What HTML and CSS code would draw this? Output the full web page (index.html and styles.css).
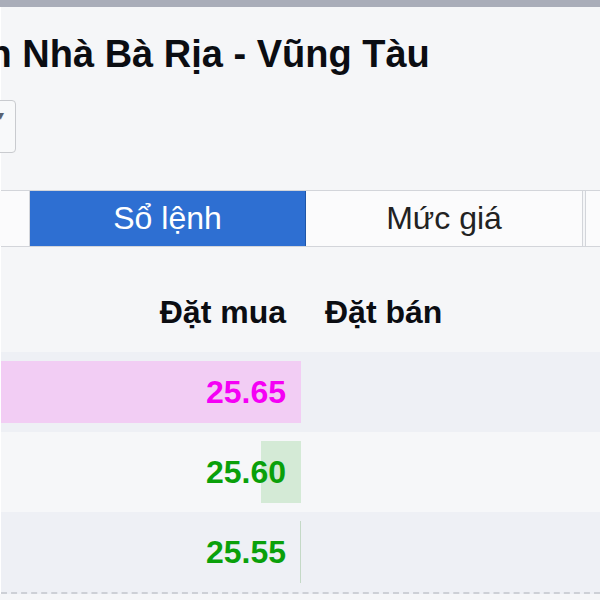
FILE: index.html
```html
<!DOCTYPE html>
<html lang="vi">
<head>
    <meta charset="UTF-8">
    <meta name="viewport" content="width=device-width, initial-scale=1.0">
    <title>HDC - Sổ lệnh</title>
    <link rel="stylesheet" href="styles.css">
</head>
<body>
    <div class="topbar"></div>
    <div class="panel">
        <h1 class="title">Công ty Cổ phần Phát triển Nhà Bà Rịa - Vũng Tàu</h1>
        <div class="picker">
            <span class="picker-value">HDC</span>
            <span class="picker-caret">&#9662;</span>
        </div>

        <div class="tabs">
            <div class="tab tab-first">Khớp lệnh</div>
            <div class="tab active">Sổ lệnh</div>
            <div class="tab">Mức giá</div>
            <div class="tab tab-last">Thống kê</div>
        </div>

        <div class="book">
            <div class="book-head">
                <div class="col-buy">Đặt mua</div>
                <div class="col-sell">Đặt bán</div>
            </div>
            <div class="book-row">
                <div class="col-buy">
                    <span class="bar bar-ceil" style="width: 100%"></span>
                    <span class="price ceil">25.65</span>
                </div>
                <div class="col-sell"></div>
            </div>
            <div class="book-row">
                <div class="col-buy">
                    <span class="bar bar-up" style="width: 13.3%"></span>
                    <span class="price up">25.60</span>
                </div>
                <div class="col-sell"></div>
            </div>
            <div class="book-row">
                <div class="col-buy">
                    <span class="bar bar-up bar-thin" style="width: 0.4%"></span>
                    <span class="price up">25.55</span>
                </div>
                <div class="col-sell"></div>
            </div>
        </div>
    </div>
</body>
</html>
```

FILE: styles.css
```css
body { margin: 0; height: 600px; overflow: hidden; background-color: #f5f6f8; font-family: 'Liberation Sans', Arial, sans-serif; color: #111; }
.topbar { height: 7px; background-color: #a9adb9; }
.panel { background-color: #f5f6f8; padding-top: 25px; border-left: 1px solid #fff; }
.title { margin: 0 0 24px -479px; font-size: 38px; line-height: 44px; font-weight: bold; white-space: nowrap; color: #0b0d12; }
.picker { display: flex; justify-content: space-between; align-items: flex-start; box-sizing: border-box; width: 216px; height: 53px; margin-left: -201px; padding: 7px 11px 0 12px; background: #f8f9fa; border: 1px solid #c9cbcf; border-radius: 4px; font-size: 20px; color: #5a6270; }
.picker-caret { font-size: 14px; line-height: 14px; }
.tabs { display: flex; margin-top: 37px; border-top: 1px solid #d3d5da; border-bottom: 1px solid #d3d5da; }
.tab { box-sizing: border-box; width: 277px; flex-shrink: 0; height: 55px; line-height: 55px; text-align: center; font-size: 32px; background-color: #fbfbfc; border-right: 1px solid #d3d5da; color: #222; }
.tab-first { margin-left: -248px; }
.tab-last { margin-left: 2px; border-left: 1px solid #d3d5da; }
.tab.active { width: 276px; background-color: #2e6fd2; color: #fff; border-right-color: #1f56a8; }
.book-head, .book-row { display: grid; grid-template-columns: 300px 1fr; }
.book-head { padding: 47px 0 21px; font-size: 32px; line-height: 37px; font-weight: bold; color: #0b0d12; }
.book-head .col-buy { text-align: right; padding-right: 15px; }
.book-head .col-sell { padding-left: 24px; }
.book-row { height: 80px; background-color: #f6f7f9; }
.book-row:nth-child(even) { background-color: #eef0f5; }
.book-row:last-child { height: 80px; border-bottom: 2px dashed #cdd0d6; }
.book-row .col-buy { position: relative; display: flex; align-items: center; justify-content: flex-end; padding-right: 15px; }
.bar { position: absolute; top: 9px; bottom: 9px; right: 0; }
.bar-ceil { background-color: #f2cdf4; }
.bar-up { background-color: #d4ead6; }
.bar-thin { min-width: 1px; background-color: #c4d9c6; }
.price { position: relative; font-size: 32px; font-weight: bold; }
.price.ceil { color: #f500f5; }
.price.up { color: #0aa00a; }
```
